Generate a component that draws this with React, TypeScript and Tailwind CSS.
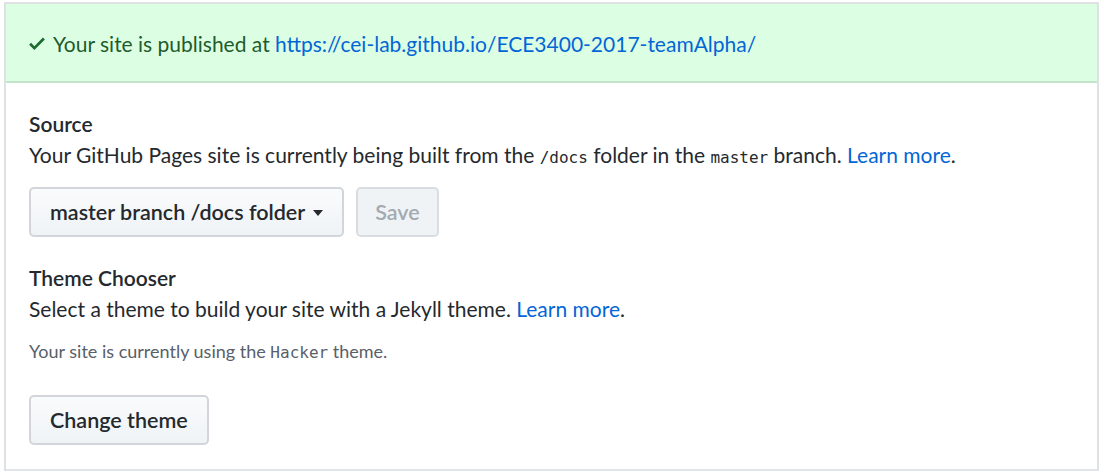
import React from "react";

const sans = { fontFamily: "Lato, 'Noto Sans', 'Liberation Sans', sans-serif" };
const mono = { fontFamily: "'DejaVu Sans Mono', 'Liberation Mono', monospace" };

function CheckIcon() {
  return (
    <svg width="16" height="21" viewBox="0 0 12 16" className="fill-[#1e6b31] shrink-0">
      <path d="M12 5l-8 8-4-4 1.5-1.5L4 10l6.5-6.5L12 5z" />
    </svg>
  );
}

function Button({ children, disabled }: { children: React.ReactNode; disabled?: boolean }) {
  return (
    <button
      className={
        disabled
          ? "h-[50px] px-[17px] rounded-[5px] border-2 border-[#d9dde2] bg-[#eff3f6] text-[#a3aab1] font-semibold text-[21.5px]"
          : "h-[50px] px-[19px] rounded-[5px] border-2 border-[#d2d5d9] bg-gradient-to-b from-[#fafbfc] to-[#eff3f6] text-[#24292e] font-semibold text-[21.5px] flex items-center"
      }
    >
      {children}
    </button>
  );
}

export default function App() {
  return (
    <div className="bg-white w-[1104px] h-[472px] overflow-hidden pt-[2px] pl-[4px]" style={sans}>
      <div className="w-[1095px] border-2 border-[#dfe2e5] border-b-0 text-[21px] text-[#24292e]">
        {/* Published banner */}
        <div className="h-[79px] bg-[#dcffe4] border-b-2 border-[#c5e4cc] flex items-center gap-[8px] px-[23px] pt-[2px]">
          <CheckIcon />
          <span className="text-[#1f5c2c]">
            Your site is published at{" "}
            <a className="text-[#0366d6]">https://cei-lab.github.io/ECE3400-2017-teamAlpha/</a>
          </span>
        </div>

        <div className="px-[23px] pb-[24px] border-b-2 border-[#e1e4e8]">
          {/* Source */}
          <h3 className="mt-[25px] font-semibold leading-[31px]">Source</h3>
          <p className="leading-[31px]">
            Your GitHub Pages site is currently being built from the{" "}
            <code className="text-[16px]" style={mono}>/docs</code> folder in the{" "}
            <code className="text-[16px]" style={mono}>master</code> branch.{" "}
            <a className="text-[#0366d6]">Learn more</a>.
          </p>
          <div className="flex gap-[12px] mt-[14px]">
            <Button>
              master branch /docs folder
              <span className="ml-[8px] mt-[2px] w-0 h-0 border-x-[5px] border-x-transparent border-t-[6px] border-t-[#24292e]" />
            </Button>
            <Button disabled>Save</Button>
          </div>

          {/* Theme chooser */}
          <h3 className="mt-[25px] font-semibold leading-[31px]">Theme Chooser</h3>
          <p className="leading-[31px]">
            Select a theme to build your site with a Jekyll theme. <a className="text-[#0366d6]">Learn more</a>.
          </p>
          <p className="mt-[15px] text-[18px] leading-[24px] text-[#586069]">
            Your site is currently using the{" "}
            <code className="text-[16px]" style={mono}>Hacker</code> theme.
          </p>
          <div className="mt-[30px]">
            <Button>Change theme</Button>
          </div>
        </div>
      </div>
    </div>
  );
}
